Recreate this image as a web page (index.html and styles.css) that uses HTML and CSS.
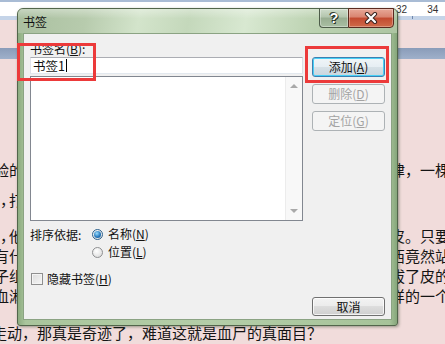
FILE: index.html
```html
<!DOCTYPE html>
<html lang="zh-CN">
<head>
<meta charset="utf-8">
<title>书签</title>
<link rel="stylesheet" href="styles.css">
</head>
<body>
<div class="screen">
  <div class="ruler">
    <div class="ruler-top"></div>
    <div class="ruler-scale"><span class="num">32</span><span class="num">34</span></div>
    <div class="ruler-bottom"><span class="tick"></span></div>
  </div>
  <div class="doc">
    <div class="band"></div>
    <div class="line l1"><span class="lt"><span>考验的</span></span><span class="rt">律，一棵</span></div>
    <div class="line l2"><span class="lt"><span>说<span class="cm">，</span>打</span></span><span class="rt"></span></div>
    <div class="line l3"><span class="lt"><span>去<span class="cm">，</span>他</span></span><span class="rt">皮。只要</span></div>
    <div class="line"><span class="lt"><span>没有什</span></span><span class="rt">西竟然站</span></div>
    <div class="line"><span class="lt"><span>样子组</span></span><span class="rt">拔了皮的</span></div>
    <div class="line"><span class="lt"><span>个血淋</span></span><span class="rt">样的一个</span></div>
    <div class="line l7"><span class="full">走动，那真是奇迹了，难道这就是血尸的真面目？</span></div>
  </div>

  <div class="dialog">
    <div class="titlebar">
      <span class="title">书签</span>
      <div class="caps">
        <span class="cap cap-help">?</span>
        <span class="cap cap-close">
          <svg width="14" height="12" viewBox="0 0 14 12">
            <path d="M3 2 L11 10 M11 2 L3 10" stroke="#3a2520" stroke-width="4.2" stroke-linecap="round"/>
            <path d="M3 2 L11 10 M11 2 L3 10" stroke="#ffffff" stroke-width="2.2" stroke-linecap="round"/>
          </svg>
        </span>
      </div>
    </div>
    <div class="client">
      <div class="col-left">
        <div class="lbl">书签名(<u>B</u>):</div>
        <div class="input"><span>书签1</span><span class="caret"></span></div>
        <div class="list">
          <div class="list-body"></div>
          <div class="vscroll">
            <span class="arrow up"></span>
            <span class="arrow down"></span>
          </div>
        </div>
        <div class="sort-row">
          <span class="sort-lbl">排序依据:</span>
          <span class="radio checked"></span>
          <span class="opt">名称(<u>N</u>)</span>
        </div>
        <div class="sort-row second">
          <span class="radio"></span>
          <span class="opt">位置(<u>L</u>)</span>
        </div>
        <div class="check-row">
          <span class="checkbox"></span>
          <span class="opt">隐藏书签(<u>H</u>)</span>
        </div>
      </div>
      <div class="col-right">
        <div class="btn default">添加(<u>A</u>)</div>
        <div class="btn disabled del">删除(<u>D</u>)</div>
        <div class="btn disabled loc">定位(<u>G</u>)</div>
        <div class="btn cancel">取消</div>
      </div>
    </div>
  </div>

  <div class="mark mark-name"></div>
  <div class="mark mark-add"></div>
</div>
</body>
</html>
```

FILE: styles.css
```css
* { box-sizing: border-box; }
html, body { margin: 0; padding: 0; }
body { background: #f1dcdb; }

.screen {
  position: relative;
  width: 445px;
  height: 344px;
  overflow: hidden;
  background: #f1dcdb;
  font-family: "Noto Sans CJK SC", "Liberation Sans", sans-serif;
}

/* ruler */
.ruler { display: flex; flex-direction: column; }
.ruler-top { height: 2px; background: #a9bcd5; }
.ruler-scale {
  height: 14px;
  background: #ffffff;
  display: flex;
  align-items: center;
  padding-left: 396px;
  gap: 20px;
  font-family: "Liberation Sans", sans-serif;
  font-size: 10px;
  color: #333;
}
.ruler-bottom { height: 4px; background: #c5d4e8; padding-left: 412px; }
.tick { display: block; width: 1px; height: 3px; background: #6f88ad; }

/* document text */
.doc { display: flex; flex-direction: column; color: #141414; font-size: 15px; }
.band { margin-top: 28px; height: 11px; background: linear-gradient(#8a9cb9, #9fb0ca); }
.line { display: flex; height: 20px; line-height: 20px; white-space: nowrap; }
.l1 { margin-top: 101px; }
.l2 { margin-top: 10px; }
.l3 { margin-top: 16px; }
.l7 { margin-top: 17px; }
.lt { width: 24px; overflow: hidden; display: flex; justify-content: flex-end; }
.lt > span { flex-shrink: 0; }
.cm { letter-spacing: -6px; margin-right: 0; }
.rt { margin-left: auto; width: 55px; overflow: hidden; }
.full { margin-left: -8px; }

/* dialog */
.dialog {
  position: absolute;
  left: 17px;
  top: 8px;
  width: 381px;
  height: 318px;
  display: flex;
  flex-direction: column;
  border: 1px solid #52664b;
  border-radius: 6px 6px 3px 3px;
  background: linear-gradient(to right, #8cab80, #a9c59c 2%, #b4cea8 50%, #a6c399 98%, #86a67b);
  box-shadow: 1px 1px 3px rgba(40, 60, 30, 0.45);
}
.titlebar {
  height: 24px;
  display: flex;
  align-items: flex-start;
  border-radius: 5px 5px 0 0;
  background:
    linear-gradient(to bottom, rgba(255,255,255,0.35), rgba(255,255,255,0) 40%),
    linear-gradient(100deg, #a9bf9f 0%, #b7cbad 18%, #d3e4cb 32%, #c4d8bb 45%, #d8e8d1 60%, #bcd2b1 78%, #adc5a2 100%);
}
.title {
  margin: 6px 0 0 5px;
  font-size: 12px;
  line-height: 14px;
  color: #111;
}
.caps { display: flex; margin: -1px 3px 0 auto; }
.cap { height: 20px; display: flex; align-items: center; justify-content: center; }
.cap-help {
  width: 29px;
  border: 1px solid #4d5c49;
  border-right: none;
  border-radius: 0 0 0 4px;
  background: linear-gradient(#cfdccb, #b3c5ad 45%, #98ad91 50%, #a9bfa3 100%);
  box-shadow: inset 0 0 0 1px rgba(255,255,255,0.35);
  color: #ffffff;
  font-family: "Liberation Sans", sans-serif;
  font-weight: bold;
  font-size: 14px;
  text-shadow: 0 0 1px #2a3328, 0 0 1px #2a3328, 1px 1px 0 #2a3328, -1px -1px 0 #3a4538;
}
.cap-close {
  width: 46px;
  border: 1px solid #5a2a1f;
  border-radius: 0 0 4px 0;
  background: linear-gradient(#e7a898, #d98470 45%, #c24a30 50%, #cf6a48 100%);
  box-shadow: inset 0 0 0 1px rgba(255,255,255,0.3);
}

.client {
  flex: 1;
  margin: 0 5px 5px 5px;
  border: 1px solid #8ba383;
  background: #f0f0f0;
  display: grid;
  grid-template-columns: 273px 73px;
  column-gap: 9px;
  padding: 8px 0 3px 6px;
  font-size: 12px;
  color: #111;
}
.col-left { display: flex; flex-direction: column; }
.lbl { height: 15px; line-height: 14px; }
.input {
  height: 17px;
  border: 1px solid #abadb3;
  border-color: #abadb3 #dbdfe6 #e3e9ef #e2e3ea;
  background: #fff;
  padding-left: 2px;
  display: flex;
  align-items: center;
  line-height: 14px;
  font-size: 12.5px;
}
.caret { width: 1px; height: 13px; background: #000; margin-left: 1px; }
.list {
  margin-top: 2px;
  height: 145px;
  border: 1px solid #828790;
  background: #fff;
  display: flex;
}
.list-body { flex: 1; }
.vscroll {
  width: 17px;
  background: #f8f8f8;
  border-left: 1px solid #ececec;
  display: flex;
  flex-direction: column;
  justify-content: space-between;
  align-items: center;
  padding: 7px 0 7px;
}
.arrow { width: 0; height: 0; border-left: 4px solid transparent; border-right: 4px solid transparent; }
.arrow.up { border-bottom: 4px solid #a9a9a9; }
.arrow.down { border-top: 4px solid #a9a9a9; }

.sort-row { display: flex; align-items: center; height: 16px; margin-top: 5px; }
.sort-row.second { margin-top: 2px; padding-left: 62px; }
.sort-lbl { width: 62px; }
.radio {
  width: 11px;
  height: 11px;
  border-radius: 50%;
  border: 1px solid #8f9092;
  background: radial-gradient(circle at 40% 35%, #ffffff, #e2e2e2 70%, #d0d0d0);
  margin-right: 5px;
  position: relative;
}
.radio.checked { border-color: #2d628e; }
.radio.checked::after {
  content: "";
  position: absolute;
  left: 1px;
  top: 1px;
  width: 7px;
  height: 7px;
  border-radius: 50%;
  background: radial-gradient(circle at 40% 35%, #9adcfb, #2a7cc0 55%, #0f4e87);
}
.check-row { display: flex; align-items: center; height: 16px; margin-top: 11px; padding-left: 1px; }
.checkbox {
  width: 12px;
  height: 12px;
  border: 1px solid #8f8f8f;
  background: linear-gradient(135deg, #dcdcdc, #f6f6f6);
  box-shadow: inset 0 0 0 1px #f4f4f4;
  margin-right: 4px;
}
.opt { line-height: 16px; }

.col-right { display: flex; flex-direction: column; padding-top: 15px; }
.btn {
  height: 20px;
  border: 1px solid #707070;
  border-radius: 3px;
  background: linear-gradient(#f3f3f3 0%, #ebebeb 50%, #dddddd 50%, #cfcfcf 100%);
  box-shadow: inset 0 0 0 1px rgba(255,255,255,0.75);
  display: flex;
  align-items: center;
  justify-content: center;
  line-height: 14px;
  color: #111;
}
.btn.default {
  border-color: #3c7fb1;
  box-shadow: inset 0 0 0 1px #48d0f6;
  background: linear-gradient(#f0f5f8 0%, #e6eef3 50%, #d7e1e7 50%, #c9d6de 100%);
}
.btn.disabled {
  border-color: #adb2b5;
  background: #f4f4f4;
  box-shadow: none;
  color: #a3a3a3;
}
.btn.del { margin-top: 7px; }
.btn.loc { margin-top: 7px; }
.btn.cancel { margin-top: auto; height: 19px; }

/* annotation rectangles */
.mark { position: absolute; border: 3px solid #ec3a3a; }
.mark-name { left: 17px; top: 43px; width: 79px; height: 38px; }
.mark-add { left: 305px; top: 46px; width: 84px; height: 37px; }
```
